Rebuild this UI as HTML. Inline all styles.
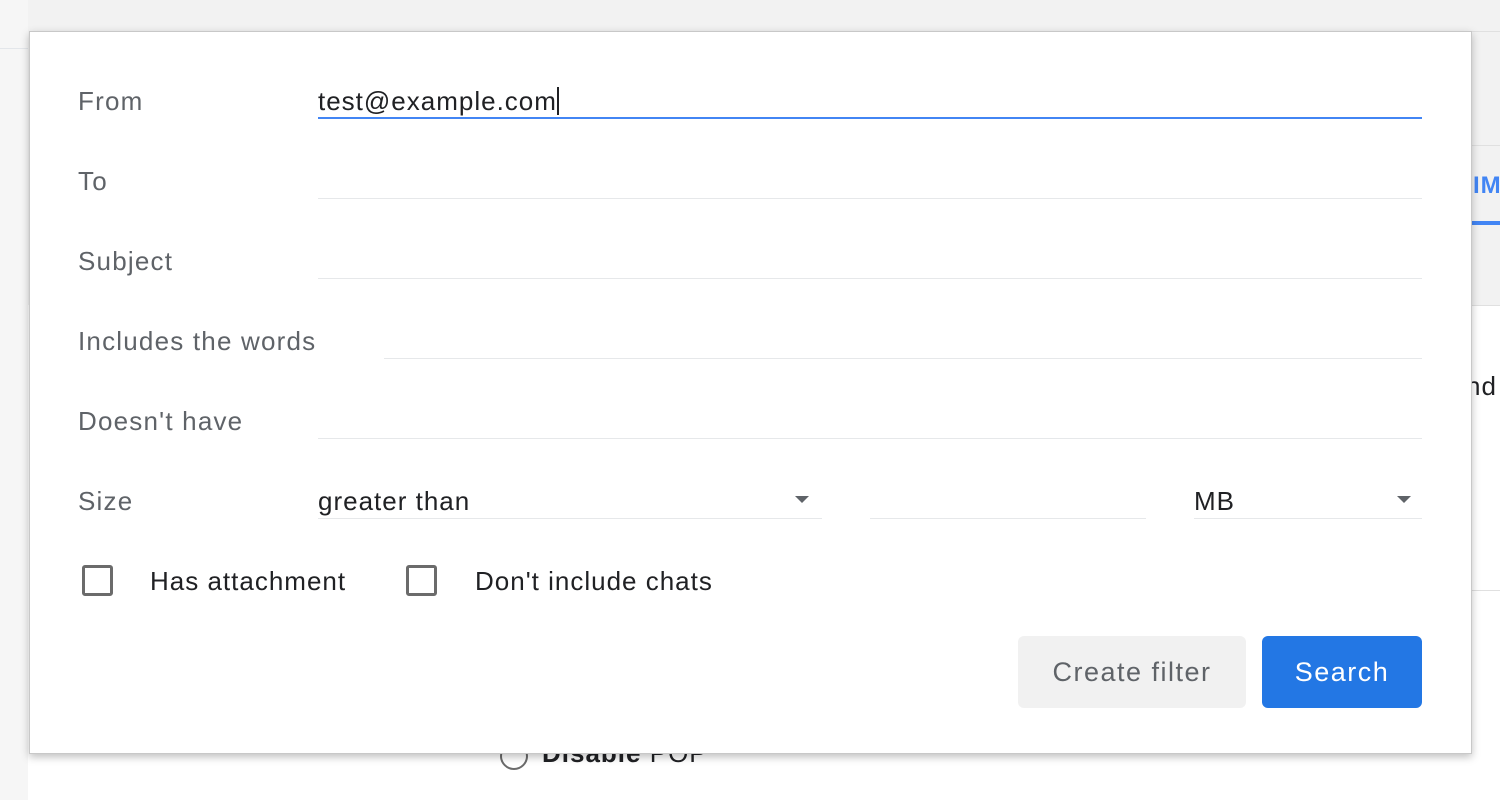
<!DOCTYPE html><html><head><style>
body{margin:0;width:1500px;height:800px;position:relative;overflow:hidden;background:#fff;font-family:"Liberation Sans",Arial,sans-serif}
.a{position:absolute}
.lbl{position:absolute;left:78px;font-size:26px;letter-spacing:1.2px;color:#5f6368;line-height:30px}
.ln{position:absolute;height:1px;background:#e6e8ea}
.tx{position:absolute;font-size:26px;letter-spacing:1px;color:#202124;line-height:30px}
.cb{position:absolute;width:31px;height:31px;border:3px solid #6b6b6b;border-radius:3px;box-sizing:border-box}
.arr{position:absolute;width:0;height:0;border-left:7px solid transparent;border-right:7px solid transparent;border-top:7px solid #5f6368}
</style></head><body>
<div class="a" style="left:0;top:0;width:28px;height:800px;background:#f6f6f6"></div>
<div class="a" style="left:0;top:48px;width:28px;height:1px;background:#e3e6ea"></div>
<div class="a" style="left:28px;top:0;width:1472px;height:305px;background:#f2f2f2"></div>
<div class="a" style="left:1471px;top:31px;width:29px;height:1px;background:#e0e0e0"></div>
<div class="a" style="left:1471px;top:145px;width:29px;height:1px;background:#e0e0e0"></div>
<div class="a" style="left:1471px;top:305px;width:29px;height:1px;background:#e0e0e0"></div>
<div class="a" style="left:1471px;top:590px;width:29px;height:1px;background:#e0e0e0"></div>
<div class="a" style="left:1473px;top:172px;font-size:24px;color:#4285f4;font-weight:bold;letter-spacing:1px">IM</div>
<div class="a" style="left:1472px;top:221px;width:28px;height:4px;background:#4285f4"></div>
<div class="a" style="left:1466px;top:371px;font-size:26px;color:#202124;letter-spacing:1px">nd</div>
<div class="a" style="left:500px;top:742px;width:24px;height:24px;border:2px solid #6b6b6b;border-radius:50%"></div>
<div class="a" style="left:542px;top:738px;font-size:26px;color:#202124;letter-spacing:1px"><b>Disable</b> POP</div>
<div class="a" style="left:29px;top:31px;width:1441px;height:721px;background:#fff;border:1px solid #c8c8c8;box-shadow:0 3px 8px rgba(0,0,0,.25)"></div>
<div class="lbl" style="top:86px">From</div>
<div class="tx" style="left:318px;top:86px">test@example.com<span style="display:inline-block;width:2px;height:28px;background:#202124;vertical-align:-5px"></span></div>
<div class="ln" style="left:318px;top:117px;width:1104px;height:2px;background:#4285f4"></div>
<div class="lbl" style="top:166px">To</div><div class="ln" style="left:318px;top:198px;width:1104px"></div>
<div class="lbl" style="top:246px">Subject</div><div class="ln" style="left:318px;top:278px;width:1104px"></div>
<div class="lbl" style="top:326px">Includes the words</div><div class="ln" style="left:384px;top:358px;width:1038px"></div>
<div class="lbl" style="top:406px">Doesn't have</div><div class="ln" style="left:318px;top:438px;width:1104px"></div>
<div class="lbl" style="top:486px">Size</div>
<div class="tx" style="left:318px;top:486px">greater than</div><div class="arr" style="left:795px;top:496px"></div>
<div class="ln" style="left:318px;top:518px;width:504px"></div>
<div class="ln" style="left:870px;top:518px;width:276px"></div>
<div class="tx" style="left:1194px;top:486px">MB</div><div class="arr" style="left:1397px;top:496px"></div>
<div class="ln" style="left:1194px;top:518px;width:228px"></div>
<div class="cb" style="left:82px;top:565px"></div><div class="tx" style="left:150px;top:566px">Has attachment</div>
<div class="cb" style="left:406px;top:565px"></div><div class="tx" style="left:475px;top:566px">Don't include chats</div>
<div class="a" style="left:1018px;top:636px;width:228px;height:72px;background:#f1f1f1;border-radius:6px;color:#5f6368;font-size:27px;letter-spacing:1.5px;line-height:72px;text-align:center">Create filter</div>
<div class="a" style="left:1262px;top:636px;width:160px;height:72px;background:#2377e4;border-radius:6px;color:#fff;font-size:27px;letter-spacing:1.5px;line-height:72px;text-align:center">Search</div>
</body></html>
